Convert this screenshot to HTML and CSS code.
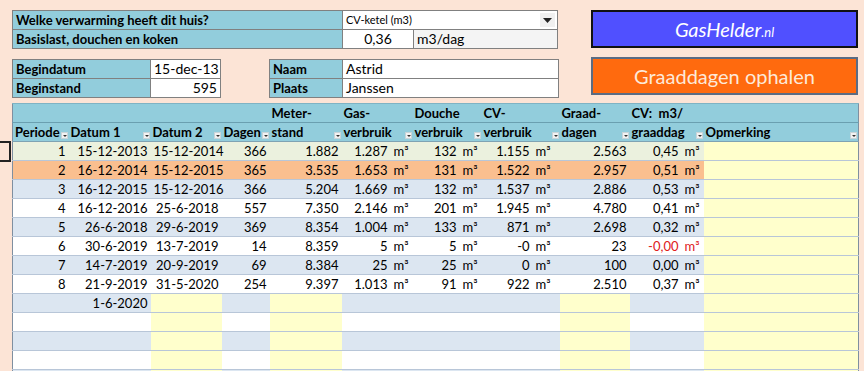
FILE: index.html
```html
<!DOCTYPE html>
<html lang="nl">
<head>
    <meta charset="UTF-8">
    <title>Gasverbruik per periode</title>
    <link rel="stylesheet" href="styles.css">
</head>
<body>

    <div class="sheet">
        <div class="top">
            <div class="inputs">
                <div class="box wide">
                    <div class="row">
                        <div class="lbl lbl-wide">Welke verwarming heeft dit huis?</div>
                        <div class="val select">
                            <span>CV-ketel (m3)</span>
                            <span class="drop"><svg width="9" height="5" viewBox="0 0 9 5"><path d="M0 0h9L4.5 5z" fill="#222"/></svg></span>
                        </div>
                    </div>
                    <div class="row">
                        <div class="lbl lbl-wide">Basislast, douchen en koken</div>
                        <div class="val num-c">0,36</div>
                        <div class="val unit">m3/dag</div>
                    </div>
                </div>

                <div class="pair">
                    <div class="box">
                        <div class="row">
                            <div class="lbl lbl-date">Begindatum</div>
                            <div class="val num-r">15-dec-13</div>
                        </div>
                        <div class="row">
                            <div class="lbl lbl-date">Beginstand</div>
                            <div class="val num-r">595</div>
                        </div>
                    </div>
                    <div class="box">
                        <div class="row">
                            <div class="lbl lbl-name">Naam</div>
                            <div class="val name">Astrid</div>
                        </div>
                        <div class="row">
                            <div class="lbl lbl-name">Plaats</div>
                            <div class="val name">Janssen</div>
                        </div>
                    </div>
                </div>
            </div>

            <div class="buttons">
                <button class="btn-site">GasHelder<small>.nl</small></button>
                <button class="btn-fetch">Graaddagen ophalen</button>
            </div>
        </div>

        <div class="table-wrap">
            <span class="cursor"></span>
            <table class="periods">
                <colgroup>
                    <col style="width:56px"><col style="width:82px"><col style="width:71px"><col style="width:48px">
                    <col style="width:72px"><col style="width:71px"><col style="width:69px"><col style="width:78px">
                    <col style="width:70px"><col style="width:74px"><col style="width:155px">
                </colgroup>
                <thead>
                    <tr class="h1">
                        <th></th><th></th><th></th><th></th>
                        <th>Meter-</th><th>Gas-</th><th>Douche</th><th>CV-</th>
                        <th>Graad-</th><th>CV:&nbsp; m3/</th><th></th>
                    </tr>
                    <tr class="h2">
                        <th>Periode<i class="flt"></i></th>
                        <th>Datum 1<i class="flt"></i></th>
                        <th>Datum 2<i class="flt"></i></th>
                        <th>Dagen<i class="flt"></i></th>
                        <th>stand<i class="flt"></i></th>
                        <th>verbruik<i class="flt"></i></th>
                        <th>verbruik<i class="flt"></i></th>
                        <th>verbruik<i class="flt"></i></th>
                        <th>dagen<i class="flt"></i></th>
                        <th>graaddag<i class="flt"></i></th>
                        <th>Opmerking<i class="flt"></i></th>
                    </tr>
                </thead>
                <tbody>
                    <tr class="first">
                        <td>1</td><td>15-12-2013</td><td>15-12-2014</td><td>366</td><td>1.882</td>
                        <td class="m3">1.287<span class="u">m³</span></td>
                        <td class="m3">132<span class="u">m³</span></td>
                        <td class="m3 cv">1.155<span class="u">m³</span></td>
                        <td>2.563</td>
                        <td class="m3">0,45<span class="u">m³</span></td>
                        <td class="note"></td>
                    </tr>
                    <tr class="current">
                        <td>2</td><td>16-12-2014</td><td>15-12-2015</td><td>365</td><td>3.535</td>
                        <td class="m3">1.653<span class="u">m³</span></td>
                        <td class="m3">131<span class="u">m³</span></td>
                        <td class="m3 cv">1.522<span class="u">m³</span></td>
                        <td>2.957</td>
                        <td class="m3">0,51<span class="u">m³</span></td>
                        <td class="note"></td>
                    </tr>
                    <tr>
                        <td>3</td><td>16-12-2015</td><td>15-12-2016</td><td>366</td><td>5.204</td>
                        <td class="m3">1.669<span class="u">m³</span></td>
                        <td class="m3">132<span class="u">m³</span></td>
                        <td class="m3 cv">1.537<span class="u">m³</span></td>
                        <td>2.886</td>
                        <td class="m3">0,53<span class="u">m³</span></td>
                        <td class="note"></td>
                    </tr>
                    <tr>
                        <td>4</td><td>16-12-2016</td><td>25-6-2018</td><td>557</td><td>7.350</td>
                        <td class="m3">2.146<span class="u">m³</span></td>
                        <td class="m3">201<span class="u">m³</span></td>
                        <td class="m3 cv">1.945<span class="u">m³</span></td>
                        <td>4.780</td>
                        <td class="m3">0,41<span class="u">m³</span></td>
                        <td class="note"></td>
                    </tr>
                    <tr>
                        <td>5</td><td>26-6-2018</td><td>29-6-2019</td><td>369</td><td>8.354</td>
                        <td class="m3">1.004<span class="u">m³</span></td>
                        <td class="m3">133<span class="u">m³</span></td>
                        <td class="m3 cv">871<span class="u">m³</span></td>
                        <td>2.698</td>
                        <td class="m3">0,32<span class="u">m³</span></td>
                        <td class="note"></td>
                    </tr>
                    <tr>
                        <td>6</td><td>30-6-2019</td><td>13-7-2019</td><td>14</td><td>8.359</td>
                        <td class="m3">5<span class="u">m³</span></td>
                        <td class="m3">5<span class="u">m³</span></td>
                        <td class="m3 cv">-0<span class="u">m³</span></td>
                        <td>23</td>
                        <td class="m3 neg">-0,00<span class="u">m³</span></td>
                        <td class="note"></td>
                    </tr>
                    <tr>
                        <td>7</td><td>14-7-2019</td><td>20-9-2019</td><td>69</td><td>8.384</td>
                        <td class="m3">25<span class="u">m³</span></td>
                        <td class="m3">25<span class="u">m³</span></td>
                        <td class="m3 cv">0<span class="u">m³</span></td>
                        <td>100</td>
                        <td class="m3">0,00<span class="u">m³</span></td>
                        <td class="note"></td>
                    </tr>
                    <tr>
                        <td>8</td><td>21-9-2019</td><td>31-5-2020</td><td>254</td><td>9.397</td>
                        <td class="m3">1.013<span class="u">m³</span></td>
                        <td class="m3">91<span class="u">m³</span></td>
                        <td class="m3 cv">922<span class="u">m³</span></td>
                        <td>2.510</td>
                        <td class="m3">0,37<span class="u">m³</span></td>
                        <td class="note"></td>
                    </tr>
                    <tr class="open">
                        <td></td><td>1-6-2020</td><td class="note"></td><td></td><td class="note"></td>
                        <td></td><td></td><td></td><td class="note"></td><td></td><td class="note"></td>
                    </tr>
                    <tr class="open">
                        <td></td><td></td><td class="note"></td><td></td><td class="note"></td>
                        <td></td><td></td><td></td><td class="note"></td><td></td><td class="note"></td>
                    </tr>
                    <tr class="open">
                        <td></td><td></td><td class="note"></td><td></td><td class="note"></td>
                        <td></td><td></td><td></td><td class="note"></td><td></td><td class="note"></td>
                    </tr>
                    <tr class="open">
                        <td></td><td></td><td class="note"></td><td></td><td class="note"></td>
                        <td></td><td></td><td></td><td class="note"></td><td></td><td class="note"></td>
                    </tr>
                    <tr class="open">
                        <td></td><td></td><td class="note"></td><td></td><td class="note"></td>
                        <td></td><td></td><td></td><td class="note"></td><td></td><td class="note"></td>
                    </tr>
                </tbody>
            </table>
        </div>
    </div>

</body>
</html>
```

FILE: styles.css
```css
body {
    background-color: #fce4d6;
    color: #000;
    font-family: Lato, "Open Sans", sans-serif;
    font-size: 13px;
    margin: 0;
    padding: 0;
    overflow: hidden;
}

.sheet {
    padding: 10px 0 0 12px;
}

.top {
    display: flex;
    gap: 33px;
    height: 93px;
}

.inputs {
    width: 546px;
    display: flex;
    flex-direction: column;
    gap: 10px;
}

.box {
    border: 1px solid #808080;
    display: flex;
    flex-direction: column;
}

.row {
    display: flex;
    height: 18px;
}

.row + .row {
    border-top: 1px solid #808080;
}

.lbl {
    background: #92cddc;
    font-weight: bold;
    padding: 0 3px;
    line-height: 18px;
    border-right: 1px solid #808080;
    white-space: nowrap;
}

.lbl-wide { width: 323px; }
.lbl-date { width: 131px; }
.lbl-name { width: 66px; }

.val {
    background: #fff;
    line-height: 18px;
    padding: 0 3px;
    white-space: nowrap;
}

.select {
    flex: 1;
    display: flex;
    justify-content: space-between;
    align-items: center;
    font-size: 11px;
    padding-right: 2px;
}

.drop {
    width: 15px;
    height: 14px;
    background: #f0f0f0;
    display: flex;
    align-items: center;
    justify-content: center;
}

.num-c {
    width: 64px;
    text-align: center;
    border-right: 1px solid #808080;
    font-size: 14px;
}

.unit {
    flex: 1;
    background: #f4f4f4;
    font-size: 14px;
}

.num-r {
    width: 63px;
    text-align: right;
    font-size: 14px;
}

.name {
    width: 209px;
    font-size: 14px;
}

.pair {
    display: flex;
    gap: 48px;
}

.buttons {
    width: 267px;
    display: flex;
    flex-direction: column;
    gap: 9px;
}

.buttons button {
    font-family: inherit;
    cursor: pointer;
    color: #fff;
}

.btn-site {
    height: 38px;
    background: #5050ff;
    border: 2px solid #111;
    font-size: 20px;
    font-style: italic;
}

.btn-site small {
    font-size: 13px;
}

.btn-fetch {
    height: 38px;
    background: #ff6a0e;
    border: 2px solid #5b6b82;
    font-size: 20px;
    color: #fde9d9 !important;
}

.table-wrap {
    position: relative;
    margin-top: 0;
}

.cursor {
    position: absolute;
    left: -12px;
    top: 38px;
    width: 9px;
    height: 17px;
    border: 2px solid #222;
    border-left: none;
}

.periods {
    border-collapse: collapse;
    table-layout: fixed;
    width: 846px;
    border-left: 1px solid #7f8fa0;
    border-right: 1px solid #7f8fa0;
}

.periods th {
    background: #92cddc;
    text-align: left;
    font-weight: bold;
    height: 18px;
    padding: 0 2px;
    white-space: nowrap;
    position: relative;
}

.periods .h1 th {
    border-top: 1px solid #7fb3c4;
    border-bottom: 1px solid #6a9fb0;
}

.periods .h2 th {
    border-bottom: 1px solid #7fa3b3;
}

.flt {
    position: absolute;
    right: 1px;
    bottom: 2px;
    width: 7px;
    height: 7px;
    background: #f2f2f2;
    border: 1px solid #c8d4d8;
    box-sizing: border-box;
}

.flt::after {
    content: "";
    position: absolute;
    left: 1px;
    top: 2px;
    border-left: 2px solid transparent;
    border-right: 2px solid transparent;
    border-top: 2px solid #333;
}

.periods td {
    height: 18px;
    padding: 0 3px;
    text-align: right;
    white-space: nowrap;
    border-top: 1px solid #b8c6d8;
    line-height: 18px;
}

.periods tbody tr {
    background: #dce6f1;
}

.periods tbody tr:nth-child(even) {
    background: #fff;
}

.periods tbody tr.first {
    background: #ebf1de;
}

.periods tbody tr.current {
    background: #fabf8f;
}

.periods td.note {
    background: #ffffcc;
}

.periods td.m3 {
    padding-right: 1px;
}

.periods td.cv {
    padding-right: 6px;
}

.u {
    display: inline-block;
    width: 18px;
    margin-left: 6px;
    text-align: left;
}

.neg {
    color: #e0201a;
}
```
